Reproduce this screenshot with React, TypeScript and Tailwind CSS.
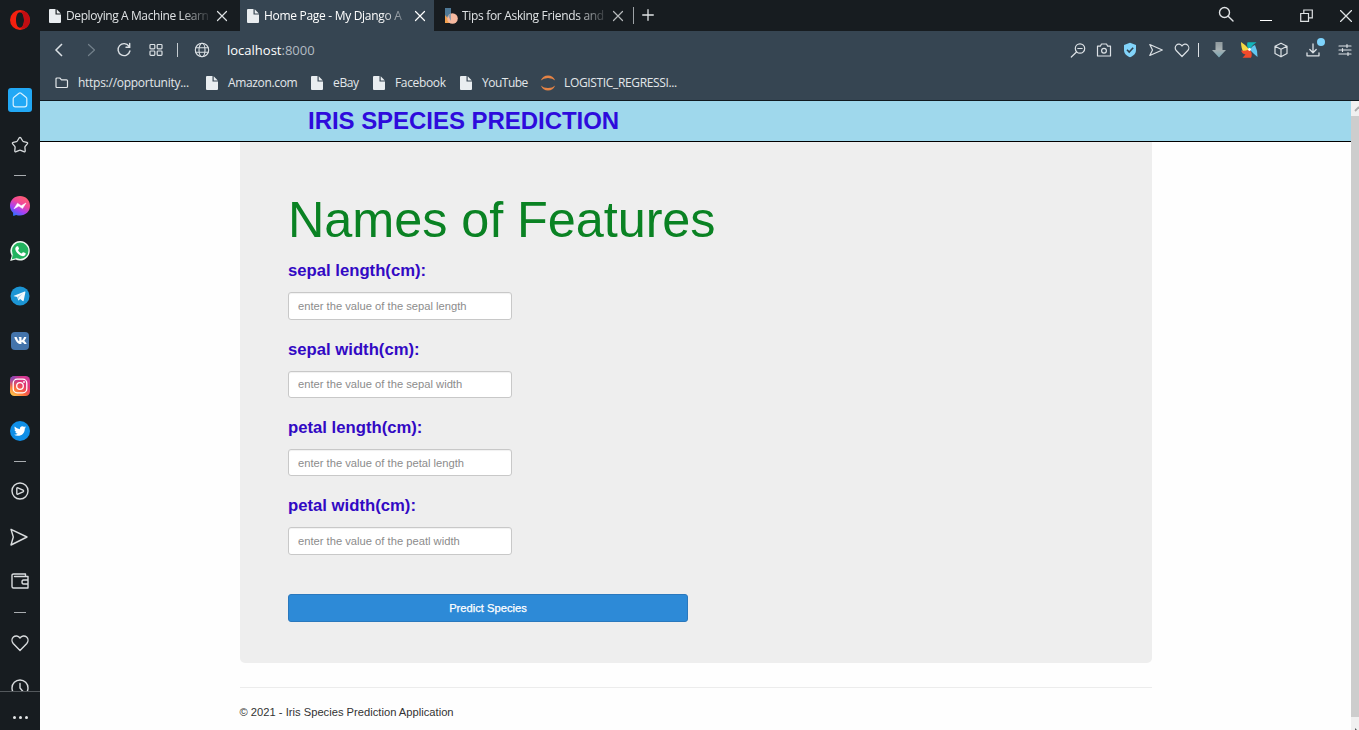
import React from "react";
import { FaVk, FaTwitter } from "react-icons/fa";

type IconProps = { className?: string; size?: number; sw?: number; children: React.ReactNode };

function Icon({ className = "", size = 20, sw = 1.2, children }: IconProps) {
  return (
    <svg
      className={`shrink-0 ${className}`}
      width={size}
      height={size}
      viewBox={`0 0 ${size} ${size}`}
      fill="none"
      stroke="currentColor"
      strokeWidth={sw}
      strokeLinecap="round"
      strokeLinejoin="round"
    >
      {children}
    </svg>
  );
}

function Page({ className = "" }: { className?: string }) {
  return (
    <svg className={`shrink-0 ${className}`} width="12" height="14" viewBox="0 0 12 14" fill="#e9edf0">
      <path d="M1 0H6.5V5.5H12V13a1 1 0 0 1-1 1H1a1 1 0 0 1-1-1V1a1 1 0 0 1 1-1Z" />
      <path d="M7.7 0.2L11.8 4.4H7.7Z" />
    </svg>
  );
}

function CloseX({ className = "" }: { className?: string }) {
  return (
    <Icon size={12} sw={1.2} className={className}>
      <path d="M1.5 1.5L10.5 10.5M10.5 1.5L1.5 10.5" />
    </Icon>
  );
}

function Cell({ children }: { children: React.ReactNode }) {
  return <div className="flex h-[45px] shrink-0 items-center justify-center">{children}</div>;
}

function Dash() {
  return (
    <div className="flex h-4 shrink-0 items-center justify-center">
      <div className="h-px w-3 bg-[#a9adb0]" />
    </div>
  );
}

function Sidebar() {
  return (
    <aside className="flex h-full w-10 shrink-0 flex-col bg-[#171c20] text-[#d9dcde]">
      <div className="flex h-10 shrink-0 items-center justify-center">
        <svg width="20" height="20" viewBox="0 0 20 20">
          <path fill="#f4200f" fillRule="evenodd" d="M10 0a10 10 0 1 0 0 20a10 10 0 1 0 0-20ZM10 2.3c2.5 0 4 3.4 4 7.7s-1.500 7.700-4 7.700s-4-3.400-4-7.700s1.500-7.700 4-7.700Z" />
          <path fill="#c20d12" d="M10 2.300C12 .8 14.500 1 16.500 2.500A10 10 0 0 1 16.500 17.500C14.500 19 12 19.200 10 17.700C12.500 17.700 14 14.300 14 10S12.500 2.300 10 2.300Z" />
        </svg>
      </div>
      <div className="flex h-[651px] shrink-0 flex-col overflow-hidden pt-[37px]">
        <Cell>
          <div className="flex size-6 items-center justify-center rounded-[3px] bg-[#22a8f5] text-[#d8f1ff]">
            <Icon size={18}>
              <path d="M2.200 7.800Q2.200 6.900 3 6.300L8 2.200Q9 1.500 10 2.200L15 6.300Q15.800 6.900 15.800 7.800V13.500Q15.800 15.800 13.500 15.800H4.500Q2.200 15.800 2.200 13.500Z" />
            </Icon>
          </div>
        </Cell>
        <Cell>
          <Icon size={18} sw={1.3}>
            <path d="M8.100 2Q9 .8 9.900 2L11.700 5Q12 5.500 12.500 5.600L15.800 6.300Q17.200 6.700 16.300 7.800L14.200 10.300Q13.800 10.800 13.900 11.400L14.200 14.700Q14.200 16.200 12.900 15.700L9.700 14.300Q9 14 8.300 14.300L5.100 15.700Q3.800 16.200 3.800 14.700L4.100 11.400Q4.200 10.800 3.800 10.300L1.700 7.800Q.8 6.700 2.200 6.300L5.500 5.600Q6 5.500 6.300 5Z" />
          </Icon>
        </Cell>
        <Dash />
        <Cell>
          <svg width="20" height="20" viewBox="0 0 20 20">
            <defs>
              <linearGradient id="msg" x1="0.15" y1="1" x2="0.7" y2="0">
                <stop offset="0" stopColor="#1878ff" />
                <stop offset="0.35" stopColor="#a840f5" />
                <stop offset="0.65" stopColor="#f0469a" />
                <stop offset="1" stopColor="#ff5f70" />
              </linearGradient>
            </defs>
            <path fill="url(#msg)" d="M10 0C4.400 0 0 4.100 0 9.700c0 2.900 1.200 5.300 3.100 7v2.500c0 .6.500.9 1 .6l2-.9c1.200.4 2.500.5 3.900.5c5.600 0 10-4.100 10-9.700S15.600 0 10 0Z" />
            <path d="M4 12.800L7.500 7.200L11.200 9.700L16 7L12.500 12.600L8.900 10.100Z" fill="#fff" stroke="#fff" strokeWidth=".5" strokeLinejoin="round" />
          </svg>
        </Cell>
        <Cell>
          <svg width="20" height="20" viewBox="0 0 20 20">
            <path fill="#f1faf3" d="M10.200 0A9.800 9.800 0 0 0 1.700 14.700L.2 20l5.400-1.400A9.800 9.800 0 1 0 10.200 0Z" />
            <circle cx="10.200" cy="9.800" r="8.200" fill="#22b35e" />
            <path fill="#22b35e" d="M2.800 13.500L1.900 18.200L7 17Z" />
            <path fill="#fff" d="M6.900 5.200h.8c.2 0 .4.100.5.400l.8 1.900c.1.200 0 .4-.1.600l-.7.900c-.1.200-.1.300 0 .5c.8 1.400 1.900 2.300 3.300 2.900c.2.100.4 0 .5-.1l.8-1c.2-.2.400-.2.600-.1l1.900.9c.3.100.4.300.4.500c0 1.600-1.300 2.600-2.700 2.600c-1 0-3.100-.7-5-2.500C6.200 11 5.300 9.200 5.300 7.700c0-1.200.8-2.100 1.600-2.500Z" />
          </svg>
        </Cell>
        <Cell>
          <svg width="20" height="20" viewBox="0 0 20 20">
            <circle cx="10" cy="10" r="9.500" fill="#1c95d4" />
            <path fill="#f4fafd" d="M4 9.700L14.700 5.500c.5-.2.900.1.700.8L13.700 14.500c-.1.600-.5.800-1 .5L10.100 13l-1.300 1.300c-.3.300-.6.200-.7-.2L7.200 11L4 10.200c-.4-.1-.4-.4 0-.5Z" />
            <path d="M7.500 11L13 7.300L9 11.300L8.700 13.500" fill="#a9cfe4" />
          </svg>
        </Cell>
        <Cell>
          <div className="flex h-[18px] w-[18px] items-center justify-center rounded-[4px] bg-[#4474ab] text-white">
            <FaVk size={13} />
          </div>
        </Cell>
        <Cell>
          <svg width="20" height="20" viewBox="0 0 20 20">
            <defs>
              <linearGradient id="ig" x1="0.1" y1="1" x2="0.8" y2="0">
                <stop offset="0" stopColor="#ffd04c" />
                <stop offset="0.35" stopColor="#fb6a3c" />
                <stop offset="0.65" stopColor="#e23470" />
                <stop offset="1" stopColor="#d03a9a" />
              </linearGradient>
              <radialGradient id="ig2" cx="0" cy="0" r="0.6">
                <stop offset="0" stopColor="#5459d8" />
                <stop offset="1" stopColor="#a93bb8" stopOpacity="0" />
              </radialGradient>
            </defs>
            <rect width="20" height="20" rx="4.500" fill="url(#ig)" />
            <rect width="20" height="20" rx="4.500" fill="url(#ig2)" />
            <g fill="none" stroke="#fff" strokeWidth="1.300">
              <rect x="3.200" y="3.200" width="13.600" height="13.600" rx="4" />
              <circle cx="10" cy="10" r="3.300" />
            </g>
            <circle cx="14" cy="6" r=".9" fill="#fff" />
          </svg>
        </Cell>
        <Cell>
          <div className="flex size-5 items-center justify-center rounded-full bg-[#0f8ee6] text-white">
            <FaTwitter size={12} />
          </div>
        </Cell>
        <Dash />
        <Cell>
          <Icon size={18} sw={1.400} className="-mt-px -ml-px">
            <circle cx="9" cy="9" r="8" />
            <path d="M5.800 6.500Q5.800 5.300 6.900 5.800L12 8.200Q13.200 9 12 9.800L6.900 12.200Q5.800 12.700 5.800 11.500Z" />
          </Icon>
        </Cell>
        <Cell>
          <Icon size={18} sw={1.400} className="-ml-[2px]">
            <path d="M1 1.300L17 9L1 17L3.300 9Z" />
          </Icon>
        </Cell>
        <Cell>
          <Icon size={18} sw={1.400} className="-mt-px -ml-px">
            <path d="M14.500 4.500V2H2.500Q1 2 1 3.300V14.500Q1 16 2.500 16H17V4.500H3.500M17 8H12.500Q11 8 11 10T12.500 12H17" />
          </Icon>
        </Cell>
        <Dash />
        <Cell>
          <Icon size={18} sw={1.400} className="-ml-px">
            <path d="M9 16.500L2.200 9.500C.5 7.500.7 4.700 2.400 3.100C4.300 1.300 7.300 1.600 9 4C10.700 1.600 13.700 1.300 15.600 3.100C17.300 4.700 17.500 7.500 15.800 9.500Z" />
          </Icon>
        </Cell>
        <Cell>
          <Icon size={18} sw={1.400} className="-ml-px">
            <circle cx="9" cy="9" r="8" />
            <path d="M9 4.500V9L12 12.500" />
          </Icon>
        </Cell>
      </div>
      <div className="flex h-[39px] items-center justify-center gap-[3px] border-t border-[#53585c] pt-[13px]">
        <div className="size-[3px] rounded-full bg-[#e4e6e7]" />
        <div className="size-[3px] rounded-full bg-[#e4e6e7]" />
        <div className="size-[3px] rounded-full bg-[#e4e6e7]" />
      </div>
    </aside>
  );
}

const fade = "[mask-image:linear-gradient(to_right,black_calc(100%_-_28px),rgba(0,0,0,0.15))]";

function TabBar() {
  return (
    <div className="flex h-[31px] shrink-0 bg-[#171c20] text-[12px] tracking-[-0.24px] text-[#dfe2e4]">
      <div className="flex w-[200px] items-center pl-[9px]">
        <Page />
        <span className={`ml-[5px] w-[142px] whitespace-nowrap tracking-[-0.4px] ${fade}`}>Deploying A Machine Learn</span>
        <CloseX className="ml-[8px]" />
      </div>
      <div className="flex w-[194px] items-center bg-[#364552] pl-[7px] text-white">
        <Page />
        <span className={`ml-[5px] w-[144px] whitespace-nowrap tracking-[-0.3px] ${fade}`}>Home Page - My Django A</span>
        <CloseX className="ml-[6px]" />
      </div>
      <div className="flex w-[199px] items-center pl-[10px]">
        <svg width="14" height="16" viewBox="0 0 14 16" className="shrink-0">
          <rect x="1" y="0" width="6" height="15" fill="#4e7896" />
          <path d="M1 7L8 15H1Z" fill="#f2a04e" />
          <circle cx="8.500" cy="10.500" r="5.300" fill="#f6b9a0" />
          <path d="M4 7.500A5.300 5.300 0 0 1 7 5.400V13Z" fill="#8f9fac" />
        </svg>
        <span className={`ml-[4px] w-[143px] whitespace-nowrap tracking-[-0.32px] ${fade}`}>Tips for Asking Friends and</span>
        <CloseX className="ml-[7px] opacity-80" />
      </div>
      <div className="mt-[7px] h-[17px] w-px bg-[#9da2a6]" />
      <div className="flex items-center pl-[8px] pb-px">
        <Icon size={12} sw={1.300}>
          <path d="M6 .7V11.300M.7 6H11.300" />
        </Icon>
      </div>
      <div className="ml-auto flex items-center">
        <Icon size={16} sw={1.400} className="-mt-[3px] mr-[26px]">
          <circle cx="6.500" cy="6.500" r="5" />
          <path d="M10.200 10.200L15 15" />
        </Icon>
        <div className="mr-[28px] mt-[9px] h-px w-3 bg-white" />
        <Icon size={13} sw={1.200} className="mr-[27px]">
          <path d="M.7 4.500H8.500V12.300H.7ZM3.800 4.300V1H12.300V8.800H8.700" strokeLinejoin="miter" />
        </Icon>
        <Icon size={12} sw={1.300} className="mr-[7px]">
          <path d="M.5 .5L11.500 11.500M11.500 .5L.5 11.500" />
        </Icon>
      </div>
    </div>
  );
}

function Toolbar() {
  return (
    <div className="flex h-[38px] shrink-0 items-center bg-[#364552] text-[#dce1e5]">
      <Icon size={14} sw={1.500} className="ml-[12px]">
        <path d="M10 1L4 7L10 13" strokeLinecap="butt" strokeLinejoin="miter" />
      </Icon>
      <Icon size={14} className="ml-[18px] text-[#73808b]">
        <path d="M4.500 1.500L10.500 7L4.500 12.500" />
      </Icon>
      <Icon size={16} sw={1.400} className="ml-[18px]">
        <path d="M13 4.200A6 6 0 1 0 13.900 9M13.700 1.500V5.200H10" strokeLinejoin="miter" />
      </Icon>
      <Icon size={14} sw={1.200} className="ml-[17px]">
        <rect x="1" y="1.500" width="4.800" height="4.300" rx=".8" />
        <rect x="8.200" y="1.500" width="4.800" height="4.300" rx=".8" />
        <rect x="1" y="8" width="4.800" height="4.300" rx=".8" />
        <rect x="8.200" y="8" width="4.800" height="4.300" rx=".8" />
      </Icon>
      <div className="ml-[14px] h-[14px] w-px bg-[#c5ccd1]" />
      <Icon size={16} sw={1.100} className="ml-[16px]">
        <circle cx="8" cy="8" r="6.700" />
        <ellipse cx="8" cy="8" rx="3" ry="6.700" />
        <path d="M1.800 5.700H14.200M1.800 10.300H14.200" />
      </Icon>
      <span className="ml-[17px] mt-px whitespace-nowrap text-[13px] text-white">
        localhost<span className="text-[#b3bbc3]">:8000</span>
      </span>
      <div className="ml-auto flex items-center">
        <Icon size={16} sw={1.200}>
          <circle cx="10" cy="6.500" r="4.700" />
          <path d="M6.500 10L1.300 15M7.800 6.500H12.200" />
        </Icon>
        <Icon size={16} sw={1.200} className="ml-[10px]">
          <path d="M1.500 4.200H4.300L5.500 2H10.500L11.700 4.200H14.500V14H1.500Z" />
          <circle cx="8" cy="8.700" r="2.400" />
        </Icon>
        <svg width="14" height="16" viewBox="0 0 14 16" className="ml-[11px]">
          <path fill="#82d4fa" d="M7 .8L13 3V8C13 11.500 10.500 14 7 15.300C3.500 14 1 11.500 1 8V3Z" />
          <path d="M4 7.700L6.200 10L10.200 5.800" fill="none" stroke="#30414f" strokeWidth="1.600" />
        </svg>
        <Icon size={16} sw={1.200} className="ml-[11px]">
          <path d="M1.800 2.500L14.300 8L1.800 13.500L4.500 8Z" />
        </Icon>
        <Icon size={16} sw={1.200} className="ml-[10px]">
          <path d="M8 14.500L2.200 8.500C.8 7 .9 4.500 2.400 3.100C4 1.600 6.700 1.900 8 4C9.300 1.900 12 1.600 13.600 3.100C15.100 4.500 15.200 7 13.800 8.500Z" />
        </Icon>
        <div className="ml-[8px] h-[14px] w-px bg-[#dce1e5]" />
        <svg width="14" height="16" viewBox="0 0 14 16" className="ml-[13px]">
          <defs>
            <linearGradient id="dl" x1="0" y1="0" x2="0" y2="1">
              <stop offset="0" stopColor="#8f999d" />
              <stop offset="0.5" stopColor="#a7b0b2" />
              <stop offset="1" stopColor="#78a7b5" />
            </linearGradient>
          </defs>
          <path fill="url(#dl)" d="M3.500 0H10.500V8H14L7 15.500L0 8H3.500Z" />
        </svg>
        <svg width="17" height="16" viewBox="0 0 17 16" className="ml-[15px]">
          <path fill="#f6d743" d="M0 0L4 3L8.500 7.500L5 9L3 11Q0 7 0 0Z" />
          <path fill="#12b5bb" d="M6.500 .3H15.500L12 3L8.500 7.500Q5 4.500 6.500 .3Z" />
          <path fill="#62c6f0" d="M8.500 7.500L12 4L14 3Q16.500 8 16.500 15L12.500 11.500Z" />
          <path fill="#f04a2c" d="M0 8.500Q3.500 9.500 8.500 7.500Q12 11.500 10 15.800H1.500L4.500 12.500Q1 12 0 8.500Z" />
          <circle cx="8.500" cy="7.500" r="1.400" fill="#fff" />
        </svg>
        <Icon size={16} sw={1.200} className="ml-[15px]">
          <path d="M8 1.200L14 4.200V11.500L8 14.800L2 11.500V4.200ZM2 4.200L8 7.300L14 4.200M8 7.300V14.800" />
        </Icon>
        <div className="relative ml-[16px]">
          <Icon size={16} sw={1.300}>
            <path d="M8 2V10.500M4.800 7.500L8 10.700L11.200 7.500M2 11V13.800H14V11" />
          </Icon>
          <div className="absolute -top-[4px] left-[12px] size-[8px] rounded-full bg-[#7dd3fc]" />
        </div>
        <Icon size={14} sw={1.200} className="ml-[17px] mr-[7px]">
          <path d="M1 3H13M1 7H13M1 11H13M9 1.500V4.500M4.500 5.500V8.500M10 9.500V12.500" />
        </Icon>
      </div>
    </div>
  );
}

function Bookmarks() {
  return (
    <div className="flex h-[31px] shrink-0 items-center whitespace-nowrap bg-[#364552] pb-[3px] text-[12px] tracking-[-0.35px] text-[#e3e7ea]">
      <Icon size={14} sw={1.200} className="ml-[15px]">
        <path d="M1 3Q1 2 2 2H4.800L6.500 3.800H11.500Q12.500 3.800 12.500 4.800V10.500Q12.500 11.500 11.500 11.500H2Q1 11.500 1 10.500Z" />
      </Icon>
      <span className="ml-[9px] w-[119px] tracking-[-0.27px]">https://opportunity...</span>
      <Page className="mr-[10px] ml-[9px]" />
      <span className="w-[69px]">Amazon.com</span>
      <Page className="mr-[10px] ml-[14px]" />
      <span className="w-[26px]">eBay</span>
      <Page className="mr-[10px] ml-[14px]" />
      <span className="w-[51px]">Facebook</span>
      <Page className="mr-[10px] ml-[14px]" />
      <span className="w-[46px] tracking-[-0.5px]">YouTube</span>
      <svg width="16" height="16" viewBox="0 0 16 16" className="mr-[8px] ml-[12px] shrink-0" fill="#e58345">
        <path d="M.8 5.500Q3 .5 8 .5T15.200 5.500Q12.500 3 8 3T.8 5.500Z" />
        <path d="M.8 10.500Q3 15.500 8 15.500T15.200 10.500Q12.500 13 8 13T.8 10.500Z" />
      </svg>
      <span>LOGISTIC_REGRESSI...</span>
    </div>
  );
}

const fields = [
  { label: "sepal length(cm):", hint: "enter the value of the sepal length" },
  { label: "sepal width(cm):", hint: "enter the value of the sepal width" },
  { label: "petal length(cm):", hint: "enter the value of the petal length" },
  { label: "petal width(cm):", hint: "enter the value of the peatl width" },
];

function WebPage() {
  return (
    <div className="flex min-h-0 flex-1 border-t border-[#101a20] bg-[#fefefe]">
      <main className="flex min-w-0 flex-1 flex-col">
        <header className="flex h-[41px] shrink-0 items-center border-b border-black bg-[#9fd8ec] pl-[268px]">
          <h1 className="whitespace-nowrap text-[24px] font-bold leading-none tracking-[-0.04px] text-[#2e0bdc]">IRIS SPECIES PREDICTION</h1>
        </header>
        <div className="ml-[200px] w-[912px]">
          <section className="h-[521px] rounded-b-[5px] bg-[#eeeeee] px-12 pt-[50px]">
            <h2 className="mb-[9px] whitespace-nowrap text-[50.400px] leading-[56px] tracking-[-0.06px] text-[#0a8223]">Names of Features</h2>
            <form className="flex flex-col" onSubmit={(e) => e.preventDefault()}>
              {fields.map((f) => (
                <label key={f.label} className="flex h-[78.300px] flex-col">
                  <span className="mt-[4.300px] h-[31px] whitespace-nowrap text-[16.700px] font-bold leading-[20px] text-[#3209c4]">{f.label}</span>
                  <input
                    className="h-[27.400px] w-[224px] rounded-[3px] border border-[#c8c8c8] bg-white px-[9px] text-[11.200px] shadow-[inset_0_1px_1px_rgba(0,0,0,0.06)] outline-none placeholder:text-[#8c8c8c]"
                    placeholder={f.hint}
                  />
                </label>
              ))}
              <button className="mt-[24px] h-7 w-[400px] rounded-[3px] border border-[#2a78bd] bg-[#2d8ad7] text-[11.200px] text-white [-webkit-text-stroke:0.25px_white]">
                Predict Species
              </button>
            </form>
          </section>
          <hr className="mt-6 border-t border-[#ececec]" />
          <footer className="-ml-[0.500px] mt-4 whitespace-nowrap text-[11.200px] leading-[16px] text-[#333]">© 2021 - Iris Species Prediction Application</footer>
        </div>
      </main>
      <div className="flex w-2 shrink-0 flex-col overflow-hidden bg-[#f0f0f0]">
        <div className="flex h-[15px] items-center">
          <svg width="8" height="8" viewBox="0 0 8 8" className="shrink-0">
            <path d="M4 6L8 2" fill="none" stroke="#aaa" strokeWidth="1.800" />
          </svg>
        </div>
        <div className="h-[601px] shrink-0 bg-[#cdcdcd]" />
        <svg width="8" height="13" viewBox="0 0 8 13" className="shrink-0">
          <path d="M4 11L6 13H4Z" fill="#555" />
        </svg>
      </div>
    </div>
  );
}

export default function App() {
  return (
    <div className="flex h-[730px] w-[1359px] overflow-hidden font-['Liberation_Sans',Arial,sans-serif]">
      <Sidebar />
      <div className="flex min-w-0 flex-1 flex-col">
        <div className="font-['Open_Sans','Noto_Sans',sans-serif]">
          <TabBar />
          <Toolbar />
          <Bookmarks />
        </div>
        <WebPage />
      </div>
    </div>
  );
}
